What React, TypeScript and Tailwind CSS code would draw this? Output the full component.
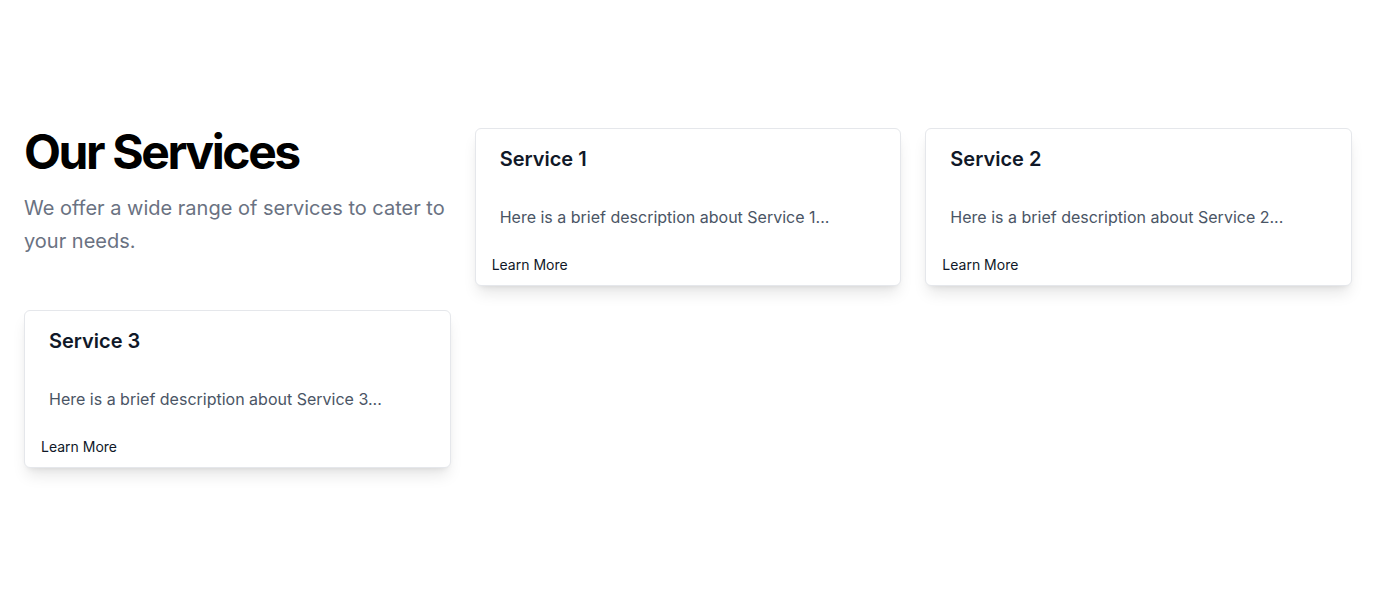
const services = [
  { title: "Service 1", description: "Here is a brief description about Service 1..." },
  { title: "Service 2", description: "Here is a brief description about Service 2..." },
  { title: "Service 3", description: "Here is a brief description about Service 3..." },
];

const ServiceCard = ({ title, description }: { title: string; description: string }) => {
  return (
    <div className="flex flex-col rounded-md border border-gray-200 bg-white shadow-lg">
      <div className="px-6 pt-4">
        <h3 className="text-xl leading-7 font-semibold text-gray-900">{title}</h3>
      </div>
      <div className="px-6 pt-8">
        <p className="text-base leading-6 text-gray-600">{description}</p>
      </div>
      <div className="px-4 pt-[26px] pb-[10px]">
        <button className="block text-sm leading-5 font-normal text-gray-900">Learn More</button>
      </div>
    </div>
  );
};

const App = () => {
  return (
    <section className="min-h-screen bg-white py-32 font-['Inter',sans-serif]">
      <div className="grid grid-cols-3 gap-6 px-6">
        <div>
          <h2 className="text-5xl leading-none font-bold tracking-tighter text-black">Our Services</h2>
          <p className="mt-4 text-xl leading-[33px] text-gray-500">
            We offer a wide range of services to cater to your needs.
          </p>
        </div>
        {services.map((s) => (
          <ServiceCard key={s.title} title={s.title} description={s.description} />
        ))}
      </div>
    </section>
  );
};

export default App;
